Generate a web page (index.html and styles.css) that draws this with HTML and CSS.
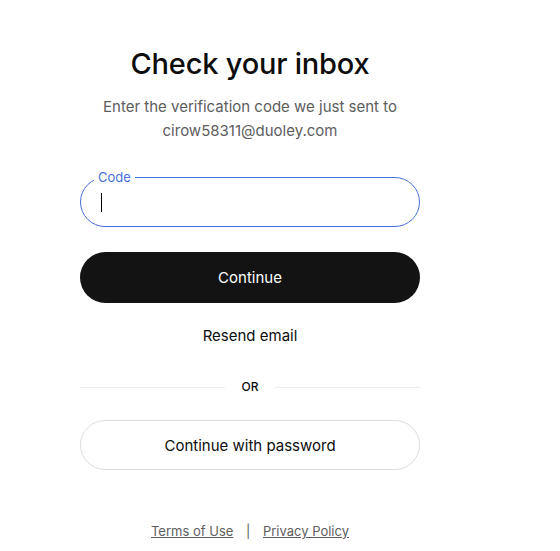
FILE: index.html
```html
<!DOCTYPE html>
<html lang="en">
<head>
  <meta charset="UTF-8">
  <meta name="viewport" content="width=device-width, initial-scale=1.0">
  <title>Check your inbox</title>
  <link rel="stylesheet" href="styles.css">
</head>
<body>
  <main class="verify">
    <h1 class="title">Check your inbox</h1>
    <p class="subtitle">Enter the verification code we just sent to cirow58311@duoley.com</p>

    <form class="verify-form">
      <div class="field">
        <label class="field-label" for="code">Code</label>
        <span class="caret"></span>
        <input type="text" class="field-input" id="code" name="code">
      </div>

      <button type="submit" class="btn btn-primary">Continue</button>
    </form>

    <button type="button" class="btn-link">Resend email</button>

    <div class="divider"><span>OR</span></div>

    <button type="button" class="btn btn-outline">Continue with password</button>

    <footer class="legal">
      <a href="#">Terms of Use</a>
      <span class="sep">|</span>
      <a href="#">Privacy Policy</a>
    </footer>
  </main>
</body>
</html>
```

FILE: styles.css
```css
body {
  margin: 0;
  background-color: #ffffff;
  font-family: Inter, "Noto Sans", sans-serif;
  color: #0d0d0d;
}

.verify {
  width: 340px;
  margin-left: 80px;
  padding-top: 44px;
  display: flex;
  flex-direction: column;
  align-items: stretch;
  text-align: center;
}

.title {
  margin: 0;
  font-size: 29px;
  font-weight: 500;
  line-height: 40px;
  letter-spacing: -0.2px;
}

.subtitle {
  margin: 11px 0 0;
  padding: 0 20px;
  font-size: 15px;
  line-height: 24px;
  color: #5d5d5d;
}

.verify-form {
  margin: 34px 0 0;
}

/* outlined input, label sits on the top border */
.field {
  position: relative;
  height: 50px;
  box-sizing: border-box;
  padding: 0 20px;
  border: 1px solid #4a6fdc;
  border-radius: 25px;
  text-align: left;
}

.field-label {
  position: absolute;
  left: 13px;
  top: -9px;
  padding: 0 4px;
  background-color: #ffffff;
  font-size: 13px;
  line-height: 16px;
  color: #4a6fdc;
}

.caret {
  position: absolute;
  left: 20px;
  top: 15px;
  width: 1px;
  height: 19px;
  background-color: #000;
}

.field-input {
  width: 100%;
  height: 48px;
  padding: 0;
  border: none;
  outline: none;
  background: transparent;
  font: inherit;
  caret-color: transparent;
}

.btn {
  display: block;
  width: 100%;
  height: 51px;
  border-radius: 26px;
  font-family: inherit;
  font-size: 15px;
  font-weight: 400;
  cursor: pointer;
}

.btn-primary {
  margin-top: 25px;
  border: none;
  background-color: #131313;
  color: #ffffff;
}

.btn-link {
  margin-top: 22px;
  height: 20px;
  padding: 0;
  border: none;
  background: none;
  font-family: inherit;
  font-size: 15px;
  color: #0d0d0d;
  cursor: pointer;
}

.divider {
  display: flex;
  align-items: center;
  margin-top: 34px;
  font-size: 12px;
  font-weight: 500;
  line-height: 16px;
}

.divider::before,
.divider::after {
  content: "";
  flex: 1;
  height: 1px;
  background-color: #ececec;
}

.divider span {
  width: 50px;
}

.btn-outline {
  margin-top: 25px;
  height: 50px;
  border: 1px solid #dcdcdc;
  background-color: #ffffff;
  color: #0d0d0d;
}

.legal {
  margin-top: 52px;
  font-size: 13px;
  line-height: 18px;
  color: #5d5d5d;
}

.legal a {
  color: #5d5d5d;
}

.legal .sep {
  margin: 0 9px;
}
```
